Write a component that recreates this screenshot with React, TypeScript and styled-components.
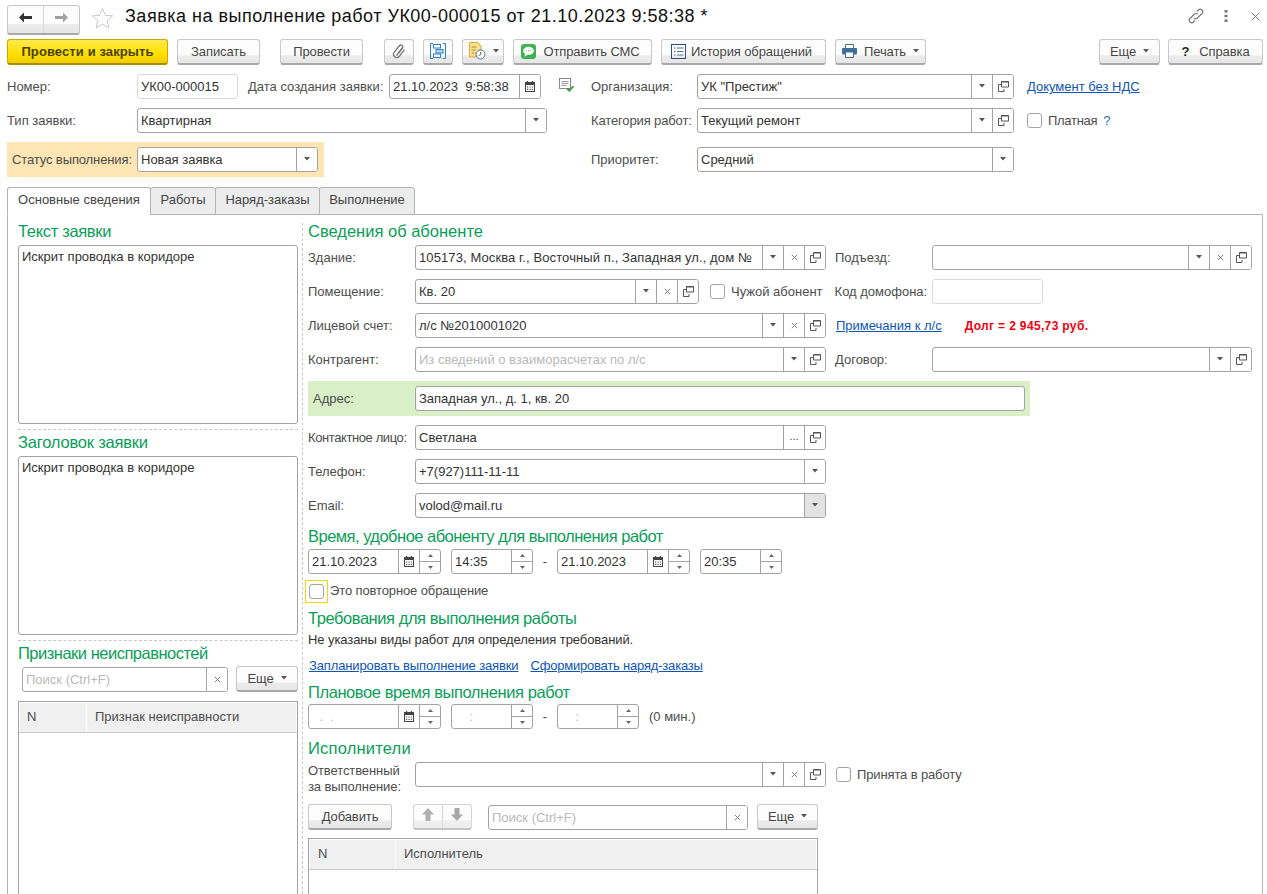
import React from "react";
import styled, { createGlobalStyle, css } from "styled-components";

const Global = createGlobalStyle`
  html, body { margin: 0; padding: 0; background: #fff; height: 100%; overflow: hidden; }
  #root { height: 100%; }
  * { box-sizing: border-box; }
`;

const Page = styled.div`
  width: 1267px; height: 894px; overflow: hidden; display: flex; flex-direction: column;
  font-family: "Liberation Sans", Arial, sans-serif; font-size: 13px; color: #333;
  padding: 0 4px 0 7px; background: #fff;
`;

const TitleBar = styled.div`
  height: 39px; padding-top: 5px; display: flex; align-items: flex-start; flex: none;
`;
const NavGroup = styled.div`
  width: 73px; height: 30px; display: flex; border: 1px solid #c8c8c8; border-bottom: 2px solid #a8a8a8;
  border-radius: 3px; background: linear-gradient(#fcfcfc 0, #fcfcfc 66%, #ececec 68%, #e6e6e6 100%);
`;
const NavCell = styled.div`
  flex: 1; display: flex; align-items: center; justify-content: center; padding-bottom: 4px;
  & + & { border-left: 1px solid #d8d8d8; }
`;
const StarBox = styled.div`
  width: 24px; height: 26px; margin-left: 11px; display: flex; align-items: center;
`;
const Title = styled.h1`
  margin: -1px 0 0 10px; font-size: 18px; font-weight: 400; color: #111; line-height: 24px; white-space: nowrap; letter-spacing: 0.5px;
`;
const WinTools = styled.div`
  margin-left: auto; display: flex; align-items: center; gap: 20px; height: 22px; padding-right: 3px;
`;
const WinClose = styled.div`
  margin-left: 3px; display: flex;
`;

const CommandBar = styled.div`
  height: 26px; display: flex; align-items: stretch; flex: none; margin-bottom: 9px;
`;
const Btn = styled.div<{ $w: number; $ml?: number; $primary?: boolean; $pr?: number; $gap?: number }>`
  width: ${(p) => p.$w}px; margin-left: ${(p) => p.$ml ?? 0}px; flex: none; height: 26px;
  display: flex; align-items: center; justify-content: center; gap: ${(p) => p.$gap ?? 7}px; padding: 0 ${(p) => p.$pr ?? 0}px 1px 0;
  border: 1px solid #c8c8c8; border-bottom: 2px solid #a8a8a8; border-radius: 3px; color: #444; white-space: nowrap; letter-spacing: -0.1px;
  background: linear-gradient(#fcfcfc 0, #fcfcfc 66%, #ececec 68%, #e6e6e6 100%);
  ${(p) => p.$primary && css`
    border-color: #c9a900; border-bottom-color: #a88f00; color: #4a4000; font-weight: 700; letter-spacing: 0.1px;
    background: linear-gradient(#ffe94d 0, #ffe000 62%, #f0cb00 100%);
  `}
`;
const HelpMark = styled.b`
  color: #222; margin-right: 3px;
`;

const Row = styled.div<{ $h?: number; $mb?: number; $mt?: number }>`
  display: flex; align-items: center; flex: none; height: ${(p) => p.$h ?? 25}px;
  margin-bottom: ${(p) => p.$mb ?? 9}px; margin-top: ${(p) => p.$mt ?? 0}px;
`;
const Label = styled.div<{ $w?: number; $ml?: number; $ls?: number; $pt?: number }>`
  ${(p) => p.$w && `width: ${p.$w}px;`} margin-left: ${(p) => p.$ml ?? 0}px; flex: none;
  padding-top: ${(p) => p.$pt ?? 0}px; letter-spacing: ${(p) => p.$ls ?? 0}px;
  color: #4d4d4d; white-space: nowrap; line-height: 14px;
`;
const StatusBand = styled.div`
  width: 317px; height: 35px; background: #fde6b4; display: flex; align-items: center; padding-left: 5px; flex: none;
`;
const AddressBand = styled.div`
  width: 722px; height: 35px; background: #d9efc8; display: flex; align-items: center; padding-left: 5px; flex: none;
`;

const FieldBox = styled.div<{ $w: number; $ml?: number; $quiet?: boolean }>`
  width: ${(p) => p.$w}px; height: 25px; flex: none; margin-left: ${(p) => p.$ml ?? 0}px; display: flex; background: #fff;
  border: 1px solid ${(p) => (p.$quiet ? "#d9d9d9" : "#a3a3a3")}; border-radius: 3px; overflow: hidden;
`;
const FieldText = styled.div<{ $ghost?: boolean; $ls?: number }>`
  flex: 1; min-width: 0; padding: 0 3px; line-height: 24px; white-space: pre; overflow: hidden;
  letter-spacing: ${(p) => p.$ls ?? 0}px;
  color: ${(p) => (p.$ghost ? "#b9b9b9" : "#333")};
`;
const FieldBtn = styled.div<{ $grey?: boolean }>`
  width: 21px; flex: none; border-left: 1px solid #a3a3a3; display: flex; align-items: center; justify-content: center;
  padding-bottom: 1px; background: ${(p) => (p.$grey ? "#e3e3e3" : "#fff")};
`;
const SpinBox = styled.div`
  width: 21px; flex: none; border-left: 1px solid #a3a3a3; display: flex; flex-direction: column;
`;
const SpinCell = styled.div`
  flex: 1; display: flex; align-items: center; justify-content: center;
  & + & { border-top: 1px solid #a3a3a3; }
`;
const DotsText = styled.span`
  font-size: 11px; color: #444; margin-top: -3px;
`;

const Check = styled.div<{ $ml?: number }>`
  width: 15px; height: 15px; flex: none; margin-left: ${(p) => p.$ml ?? 0}px; border: 1px solid #a3a3a3; border-radius: 3px; background: #fff;
`;
const FocusRing = styled.div`
  width: 23px; height: 23px; flex: none; margin-left: -3px; border: 1px solid #f5d800; display: flex; align-items: center; justify-content: center;
`;
const Link = styled.a<{ $ml?: number; $ls?: number }>`
  color: #0f55b5; text-decoration: underline; white-space: nowrap; flex: none; margin-left: ${(p) => p.$ml ?? 0}px;
  letter-spacing: ${(p) => p.$ls ?? 0}px;
`;
const Hint = styled.span`
  color: #1b6fae; margin-left: 6px;
`;
const Debt = styled.div`
  color: #f0000f; font-weight: 700; font-size: 12px; margin-left: 23px; white-space: nowrap; letter-spacing: 0.35px;
`;
const Dash = styled.div<{ $w: number }>`
  width: ${(p) => p.$w}px; flex: none; text-align: center; color: #444;
`;

const Tabs = styled.div`
  display: flex; height: 28px; margin-top: 10px; flex: none; position: relative; z-index: 1; margin-bottom: -1px;
`;
const Tab = styled.div<{ $active?: boolean; $w: number }>`
  width: ${(p) => p.$w}px; border: 1px solid #b3b3b3; border-radius: 3px 3px 0 0; text-align: center; line-height: 24px; color: #444;
  background: ${(p) => (p.$active ? "#fff" : "#ececec")}; white-space: nowrap; margin-left: -1px;
  ${(p) => p.$active && "border-bottom-color: #fff; margin-left: 0;"}
`;
const Panel = styled.div`
  flex: 1; min-height: 0; border: 1px solid #b3b3b3; border-bottom: 0; display: flex; overflow: hidden; padding-left: 10px;
`;
const LeftCol = styled.div`
  width: 280px; flex: none; display: flex; flex-direction: column; padding-top: 6px;
`;
const Divider = styled.div`
  width: 0; flex: none; margin: 8px 0 0 4px; border-left: 1px dashed #c8c8c8; align-self: stretch;
`;
const RightCol = styled.div`
  flex: 1; padding: 6px 0 0 5px; display: flex; flex-direction: column; min-width: 0;
`;
const Heading = styled.h2<{ $mb?: number; $mt?: number; $ls?: number }>`
  margin: ${(p) => p.$mt ?? 0}px 0 ${(p) => p.$mb ?? 0}px; font-size: 16.5px; font-weight: 400; color: #0a9e58;
  letter-spacing: ${(p) => p.$ls ?? 0}px;
  line-height: 20px; height: 20px; white-space: nowrap; flex: none;
`;
const TextArea = styled.div`
  height: 179px; flex: none; border: 1px solid #a3a3a3; border-radius: 3px; padding: 2px 3px; line-height: 18px; background: #fff;
`;
const HDash = styled.div`
  border-top: 1px dashed #c8c8c8; margin-top: 5px; margin-bottom: 1px; flex: none; height: 0;
`;
const ListTools = styled.div<{ $pl?: number }>`
  display: flex; align-items: flex-start; flex: none; height: 26px; margin-top: 3px; padding-left: ${(p) => p.$pl ?? 0}px;
  & > ${FieldBox} { margin-top: 1px; }
`;
const Table = styled.div<{ $w?: number; $mt?: number }>`
  flex: 1; margin-top: ${(p) => p.$mt ?? 9}px; border: 1px solid #a3a3a3; border-bottom: 0; background: #fff; min-height: 0;
  ${(p) => p.$w && `width: ${p.$w}px;`}
`;
const THead = styled.div`
  display: flex; height: 31px; border-bottom: 1px solid #c8c8c8; padding: 1px 1px 0;
`;
const TH = styled.div<{ $w?: number; $pl?: number }>`
  ${(p) => (p.$w ? `width: ${p.$w}px; flex: none;` : "flex: 1;")}
  background: #f0f0f0; padding-left: ${(p) => p.$pl ?? 8}px; line-height: 27px; color: #4d4d4d; white-space: nowrap;
  & + & { border-left: 1px solid #fff; }
`;
const Plain = styled.div`
  color: #333; white-space: nowrap; flex: none; line-height: 20px; letter-spacing: -0.08px;
`;
const MoveGroup = styled.div`
  width: 59px; height: 26px; flex: none; margin-left: 21px; display: flex; border: 1px solid #d4d4d4; border-bottom: 2px solid #c4c4c4; border-radius: 3px;
  background: linear-gradient(#fcfcfc 0, #fcfcfc 66%, #f0f0f0 68%, #ececec 100%);
`;
const Two = styled.div`
  line-height: 16px; color: #4d4d4d; width: 107px; flex: none; letter-spacing: -0.1px; align-self: flex-start; padding-top: 1px;
`;

const Tri = () => (
  <svg width="6" height="4" viewBox="0 0 6 4"><path d="M0 0h6L3 3.500z" fill="#555" /></svg>
);
const TriUp = () => (
  <svg width="5" height="3" viewBox="0 0 5 3"><path d="M0 3h5L2.500 0z" fill="#666" /></svg>
);
const TriDown = () => (
  <svg width="5" height="3" viewBox="0 0 5 3"><path d="M0 0h5L2.500 3z" fill="#666" /></svg>
);
const Cross = () => (
  <svg width="7" height="7" viewBox="0 0 7 7"><path d="M.8.8l5.400 5.400M6.200.8L.8 6.200" stroke="#808080" fill="none" /></svg>
);
const OpenIcon = () => (
  <svg width="11" height="11" viewBox="0 0 11 11" fill="none" stroke="#555">
    <path d="M3.500.5h7v5.500h-7z" /><path d="M3.500 1h7" />
    <path d="M3.500 3.500h-3v7h5.500v-2.500" />
  </svg>
);
const Cal = () => (
  <svg width="10" height="11" viewBox="0 0 10 11">
    <path d="M2 0h1.200v2H2zM6.800 0H8v2H6.800z" fill="#444" />
    <rect x=".5" y="1.500" width="9" height="9" fill="#fff" stroke="#444" />
    <path d="M.5 2h9v2H.5z" fill="#444" />
    <path d="M2 5.500h1.200v1.100H2zM4.400 5.500h1.200v1.100H4.400zM6.800 5.500H8v1.100H6.800zM2 7.800h1.200v1.100H2zM4.400 7.800h1.200v1.100H4.400zM6.800 7.800H8v1.100H6.800z" fill="#555" />
  </svg>
);

type B = "drop" | "clear" | "open" | "cal" | "dots" | "spin" | "dropGrey";
const Field = (p: { w: number; ml?: number; v?: string; ghost?: boolean; quiet?: boolean; ls?: number; b?: B[] }) => (
  <FieldBox $w={p.w} $ml={p.ml} $quiet={p.quiet}>
    <FieldText $ghost={p.ghost} $ls={p.ls}>{p.v}</FieldText>
    {(p.b ?? []).map((k, i) =>
      k === "spin" ? (
        <SpinBox key={i}><SpinCell><TriUp /></SpinCell><SpinCell><TriDown /></SpinCell></SpinBox>
      ) : (
        <FieldBtn key={i} $grey={k === "dropGrey"}>
          {(k === "drop" || k === "dropGrey") && <Tri />}
          {k === "clear" && <Cross />}
          {k === "open" && <OpenIcon />}
          {k === "cal" && <Cal />}
          {k === "dots" && <DotsText>...</DotsText>}
        </FieldBtn>
      )
    )}
  </FieldBox>
);

const ArrowL = () => (
  <svg width="13" height="11" viewBox="0 0 13 11"><path d="M0 5.500l5-5V4h8v3H5v3.500z" fill="#333" /></svg>
);
const ArrowR = () => (
  <svg width="13" height="11" viewBox="0 0 13 11"><path d="M13 5.500l-5-5V4H0v3h8v3.500z" fill="#a0a0a0" /></svg>
);
const Star = () => (
  <svg width="23" height="23" viewBox="0 0 23 23"><path d="M11.500 1.500l2.900 6.800 7.300.6-5.500 4.800 1.700 7.200-6.400-3.800-6.400 3.800 1.700-7.200-5.500-4.800 7.300-.6z" fill="#fff" stroke="#c8c8c8" /></svg>
);
const ChainIcon = () => (
  <svg width="16" height="16" viewBox="0 0 16 16" fill="none" stroke="#777" strokeWidth="1.100">
    <path d="M9 3.500l1.500-1.500a2.400 2.400 0 0 1 3.500 3.500L9.500 10a2.400 2.400 0 0 1-3.300 0" />
    <path d="M7 12.500L5.500 14A2.400 2.400 0 0 1 2 10.500L6.500 6a2.400 2.400 0 0 1 3.300 0" />
  </svg>
);
const DotsV = () => (
  <svg width="4" height="14" viewBox="0 0 4 14"><path d="M.5 1h3v2.500h-3zM.5 5.700h3v2.500h-3zM.5 10.500h3V13h-3z" fill="#777" /></svg>
);
const CloseX = () => (
  <svg width="9" height="9" viewBox="0 0 9 9"><path d="M.7.7l7.600 7.600M8.300.7L.7 8.300" stroke="#777" fill="none" /></svg>
);
const Clip = () => (
  <svg width="14" height="17" viewBox="0 0 14 17" fill="none" stroke="#777" strokeWidth="1.300">
    <path d="M4.500 12.500l6-7.500a2 2 0 0 0-3-2.500L2 9.500a3.300 3.300 0 0 0 5 4.200l5.500-7" />
    <path d="M6.500 10l3.800-5" />
  </svg>
);
const Structure = () => (
  <svg width="16" height="16" viewBox="0 0 16 16" fill="none" stroke="#2f7fc1">
    <path d="M3 .5H.5v15H3" /><path d="M13 .5h2.500V15.500H13" />
    <rect x="3.500" y="1.500" width="7" height="3.500" fill="#fff" />
    <rect x="6" y="6.500" width="7" height="3.500" fill="#b9d7ef" />
    <rect x="3.500" y="11" width="7" height="3.500" fill="#fff" />
  </svg>
);
const DocClock = () => (
  <svg width="18" height="18" viewBox="0 0 18 18">
    <path d="M1.500.5h8l3.500 3.500v11h-11.500z" fill="#fbe08c" stroke="#d9a93a" />
    <path d="M3.500 5h5M3.500 8h4M3.500 11h3" stroke="#b08a30" />
    <circle cx="12.500" cy="12.500" r="4.500" fill="#fff" stroke="#3b78b5" />
    <path d="M12.500 10v2.700l-2 1" stroke="#d24a3a" fill="none" />
  </svg>
);
const Sms = () => (
  <svg width="15" height="15" viewBox="0 0 15 15">
    <rect width="15" height="15" rx="3" fill="#3eb34f" />
    <ellipse cx="7.500" cy="6.800" rx="5.300" ry="4" fill="#fff" />
    <path d="M4 10l-.5 2.800L7 10.500z" fill="#fff" />
    <path d="M4.600 6.800h1M7 6.800h1M9.400 6.800h1" stroke="#3eb34f" />
  </svg>
);
const ListIcon = () => (
  <svg width="15" height="15" viewBox="0 0 15 15" fill="none" stroke="#2d4b7c">
    <rect x=".5" y=".5" width="14" height="14" />
    <path d="M3 4h1.500M3 7.500h1.500M3 11h1.500M6 4h6.500M6 7.500h6.500M6 11h6.500" stroke="#5a7296" />
  </svg>
);
const Printer = () => (
  <svg width="15" height="14" viewBox="0 0 15 14">
    <path d="M3.500.5h8v4h-8z" fill="#fff" stroke="#4b6c8e" />
    <rect x="0" y="4" width="15" height="6.500" rx="1" fill="#3f6f9e" />
    <path d="M3.500 8h8v5.500h-8z" fill="#fff" stroke="#4b6c8e" />
  </svg>
);
const DocCheck = () => (
  <svg width="16" height="15" viewBox="0 0 16 15">
    <rect x=".5" y=".5" width="11" height="10" fill="#fff" stroke="#888" />
    <path d="M2.500 3.500h7M2.500 5.500h7M2.500 7.500h5" stroke="#999" />
    <path d="M8 10.500l2.200 2.200 4.300-4.500" stroke="#3a9e3a" strokeWidth="1.800" fill="none" />
  </svg>
);
const MoveUp = () => (
  <svg width="12" height="13" viewBox="0 0 12 13"><path d="M6 0l6 6.500H8.500V13h-5V6.500H0z" fill="#b0b0b0" /></svg>
);
const MoveDown = () => (
  <svg width="12" height="13" viewBox="0 0 12 13"><path d="M6 13l6-6.500H8.500V0h-5v6.500H0z" fill="#a8a8a8" /></svg>
);

const More = ({ w, ml }: { w: number; ml?: number }) => (
  <Btn $w={w} $ml={ml}>Еще <Tri /></Btn>
);

export default function App() {
  return (
    <Page>
      <Global />
      <TitleBar>
        <NavGroup>
          <NavCell><ArrowL /></NavCell>
          <NavCell><ArrowR /></NavCell>
        </NavGroup>
        <StarBox><Star /></StarBox>
        <Title>Заявка на выполнение работ УК00-000015 от 21.10.2023 9:58:38 *</Title>
        <WinTools>
          <ChainIcon />
          <DotsV />
          <WinClose><CloseX /></WinClose>
        </WinTools>
      </TitleBar>

      <CommandBar>
        <Btn $w={161} $primary>Провести и закрыть</Btn>
        <Btn $w={83} $ml={9}>Записать</Btn>
        <Btn $w={83} $ml={20}>Провести</Btn>
        <Btn $w={30} $ml={21}><Clip /></Btn>
        <Btn $w={30} $ml={9}><Structure /></Btn>
        <Btn $w={42} $ml={9}><DocClock /><Tri /></Btn>
        <Btn $w={139} $ml={9} $pr={4}><Sms />Отправить СМС</Btn>
        <Btn $w={165} $ml={9} $pr={4} $gap={5}><ListIcon />История обращений</Btn>
        <Btn $w={91} $ml={9}><Printer />Печать <Tri /></Btn>
        <More w={61} ml={173} />
        <Btn $w={95} $ml={8}><HelpMark>?</HelpMark>Справка</Btn>
      </CommandBar>

      <Row>
        <Label $w={130}>Номер:</Label>
        <Field w={101} v="УК00-000015" quiet />
        <Label $w={141} $ml={10}>Дата создания заявки:</Label>
        <Field w={152} v="21.10.2023  9:58:38" b={["cal"]} />
        <Label $w={16} $ml={18}><DocCheck /></Label>
        <Label $w={106} $ml={16}>Организация:</Label>
        <Field w={317} v={'УК "Престиж"'} b={["drop", "open"]} />
        <Link $ml={13}>Документ без НДС</Link>
      </Row>
      <Row>
        <Label $w={130}>Тип заявки:</Label>
        <Field w={410} v="Квартирная" b={["drop"]} />
        <Label $w={106} $ml={44} $ls={-0.13}>Категория работ:</Label>
        <Field w={317} v="Текущий ремонт" b={["drop", "open"]} />
        <Check $ml={13} />
        <Label $ml={6} $ls={-0.3}>Платная</Label>
        <Hint>?</Hint>
      </Row>
      <Row $h={35} $mb={0}>
        <StatusBand>
          <Label $w={125} $ls={-0.12} $pt={1}>Статус выполнения:</Label>
          <Field w={181} v="Новая заявка" b={["drop"]} />
        </StatusBand>
        <Label $w={106} $ml={267} $pt={1}>Приоритет:</Label>
        <Field w={317} v="Средний" b={["drop"]} />
      </Row>

      <Tabs>
        <Tab $active $w={144}>Основные сведения</Tab>
        <Tab $w={66}>Работы</Tab>
        <Tab $w={105}>Наряд-заказы</Tab>
        <Tab $w={96}>Выполнение</Tab>
      </Tabs>

      <Panel>
        <LeftCol>
          <Heading $mb={4} $ls={-0.33}>Текст заявки</Heading>
          <TextArea>Искрит проводка в коридоре</TextArea>
          <HDash />
          <Heading $mb={4} $mt={1} $ls={-0.2}>Заголовок заявки</Heading>
          <TextArea>Искрит проводка в коридоре</TextArea>
          <HDash />
          <Heading $mt={1} $ls={-0.5}>Признаки неисправностей</Heading>
          <ListTools $pl={4}>
            <Field w={206} v="Поиск (Ctrl+F)" ghost b={["clear"]} />
            <More w={62} ml={8} />
          </ListTools>
          <Table>
            <THead>
              <TH $w={66} $pl={7}>N</TH>
              <TH>Признак неисправности</TH>
            </THead>
          </Table>
        </LeftCol>
        <Divider />
        <RightCol>
          <Heading $mb={4}>Сведения об абоненте</Heading>
          <Row>
            <Label $w={107}>Здание:</Label>
            <Field w={411} ls={0.1} v="105173, Москва г., Восточный п., Западная ул., дом №" b={["drop", "clear", "open"]} />
            <Label $w={97} $ml={9}>Подъезд:</Label>
            <Field w={320} b={["drop", "clear", "open"]} />
          </Row>
          <Row>
            <Label $w={107}>Помещение:</Label>
            <Field w={284} v="Кв. 20" b={["drop", "clear", "open"]} />
            <Check $ml={11} />
            <Label $ml={6}>Чужой абонент</Label>
            <Label $w={97} $ml={12}>Код домофона:</Label>
            <Field w={111} quiet />
          </Row>
          <Row>
            <Label $w={107}>Лицевой счет:</Label>
            <Field w={411} v="л/с №2010001020" b={["drop", "clear", "open"]} />
            <Link $ml={10}>Примечания к л/с</Link>
            <Debt>Долг = 2 945,73 руб.</Debt>
          </Row>
          <Row>
            <Label $w={107}>Контрагент:</Label>
            <Field w={411} v="Из сведений о взаиморасчетах по л/с" ghost b={["drop", "open"]} />
            <Label $w={97} $ml={9}>Договор:</Label>
            <Field w={320} b={["drop", "open"]} />
          </Row>
          <Row $h={35}>
            <AddressBand>
              <Label $w={102}>Адрес:</Label>
              <Field w={610} v="Западная ул., д. 1, кв. 20" />
            </AddressBand>
          </Row>
          <Row>
            <Label $w={107} $ls={-0.4}>Контактное лицо:</Label>
            <Field w={411} v="Светлана" b={["dots", "open"]} />
          </Row>
          <Row>
            <Label $w={107}>Телефон:</Label>
            <Field w={411} v="+7(927)111-11-11" b={["drop"]} />
          </Row>
          <Row $mb={8}>
            <Label $w={107}>Email:</Label>
            <Field w={411} v="volod@mail.ru" b={["dropGrey"]} />
          </Row>
          <Heading $mb={3} $ls={-0.52}>Время, удобное абоненту для выполнения работ</Heading>
          <Row $mb={5}>
            <Field w={133} v="21.10.2023" b={["cal", "spin"]} />
            <Field w={82} ml={10} v="14:35" b={["spin"]} />
            <Dash $w={24}>-</Dash>
            <Field w={133} v="21.10.2023" b={["cal", "spin"]} />
            <Field w={82} ml={10} v="20:35" b={["spin"]} />
          </Row>
          <Row $h={24} $mb={5}>
            <FocusRing><Check /></FocusRing>
            <Label $ml={2} $ls={-0.12}>Это повторное обращение</Label>
          </Row>
          <Heading $mb={2} $ls={-0.44}>Требования для выполнения работы</Heading>
          <Plain>Не указаны виды работ для определения требований.</Plain>
          <Row $h={20} $mt={5} $mb={7}>
            <Link $ml={1} $ls={-0.13}>Запланировать выполнение заявки</Link>
            <Link $ml={12} $ls={-0.2}>Сформировать наряд-заказы</Link>
          </Row>
          <Heading $mb={2} $ls={-0.42}>Плановое время выполнения работ</Heading>
          <Row $mb={9}>
            <Field w={133} v="  .  ." ghost b={["cal", "spin"]} />
            <Field w={82} ml={10} v="    :" ghost b={["spin"]} />
            <Dash $w={24}>-</Dash>
            <Field w={82} v="    :" ghost b={["spin"]} />
            <Label $ml={10}>(0 мин.)</Label>
          </Row>
          <Heading $mb={4} $ls={0.2}>Исполнители</Heading>
          <Row $mb={14}>
            <Two>Ответственный<br />за выполнение:</Two>
            <Field w={411} b={["drop", "clear", "open"]} />
            <Check $ml={10} />
            <Label $ml={6} $ls={-0.13}>Принята в работу</Label>
          </Row>
          <ListTools>
            <Btn $w={84}>Добавить</Btn>
            <MoveGroup>
              <NavCell><MoveUp /></NavCell>
              <NavCell><MoveDown /></NavCell>
            </MoveGroup>
            <Field w={260} ml={16} v="Поиск (Ctrl+F)" ghost b={["clear"]} />
            <More w={61} ml={9} />
          </ListTools>
          <Table $w={510} $mt={8}>
            <THead>
              <TH $w={85}>N</TH>
              <TH>Исполнитель</TH>
            </THead>
          </Table>
        </RightCol>
      </Panel>
    </Page>
  );
}
